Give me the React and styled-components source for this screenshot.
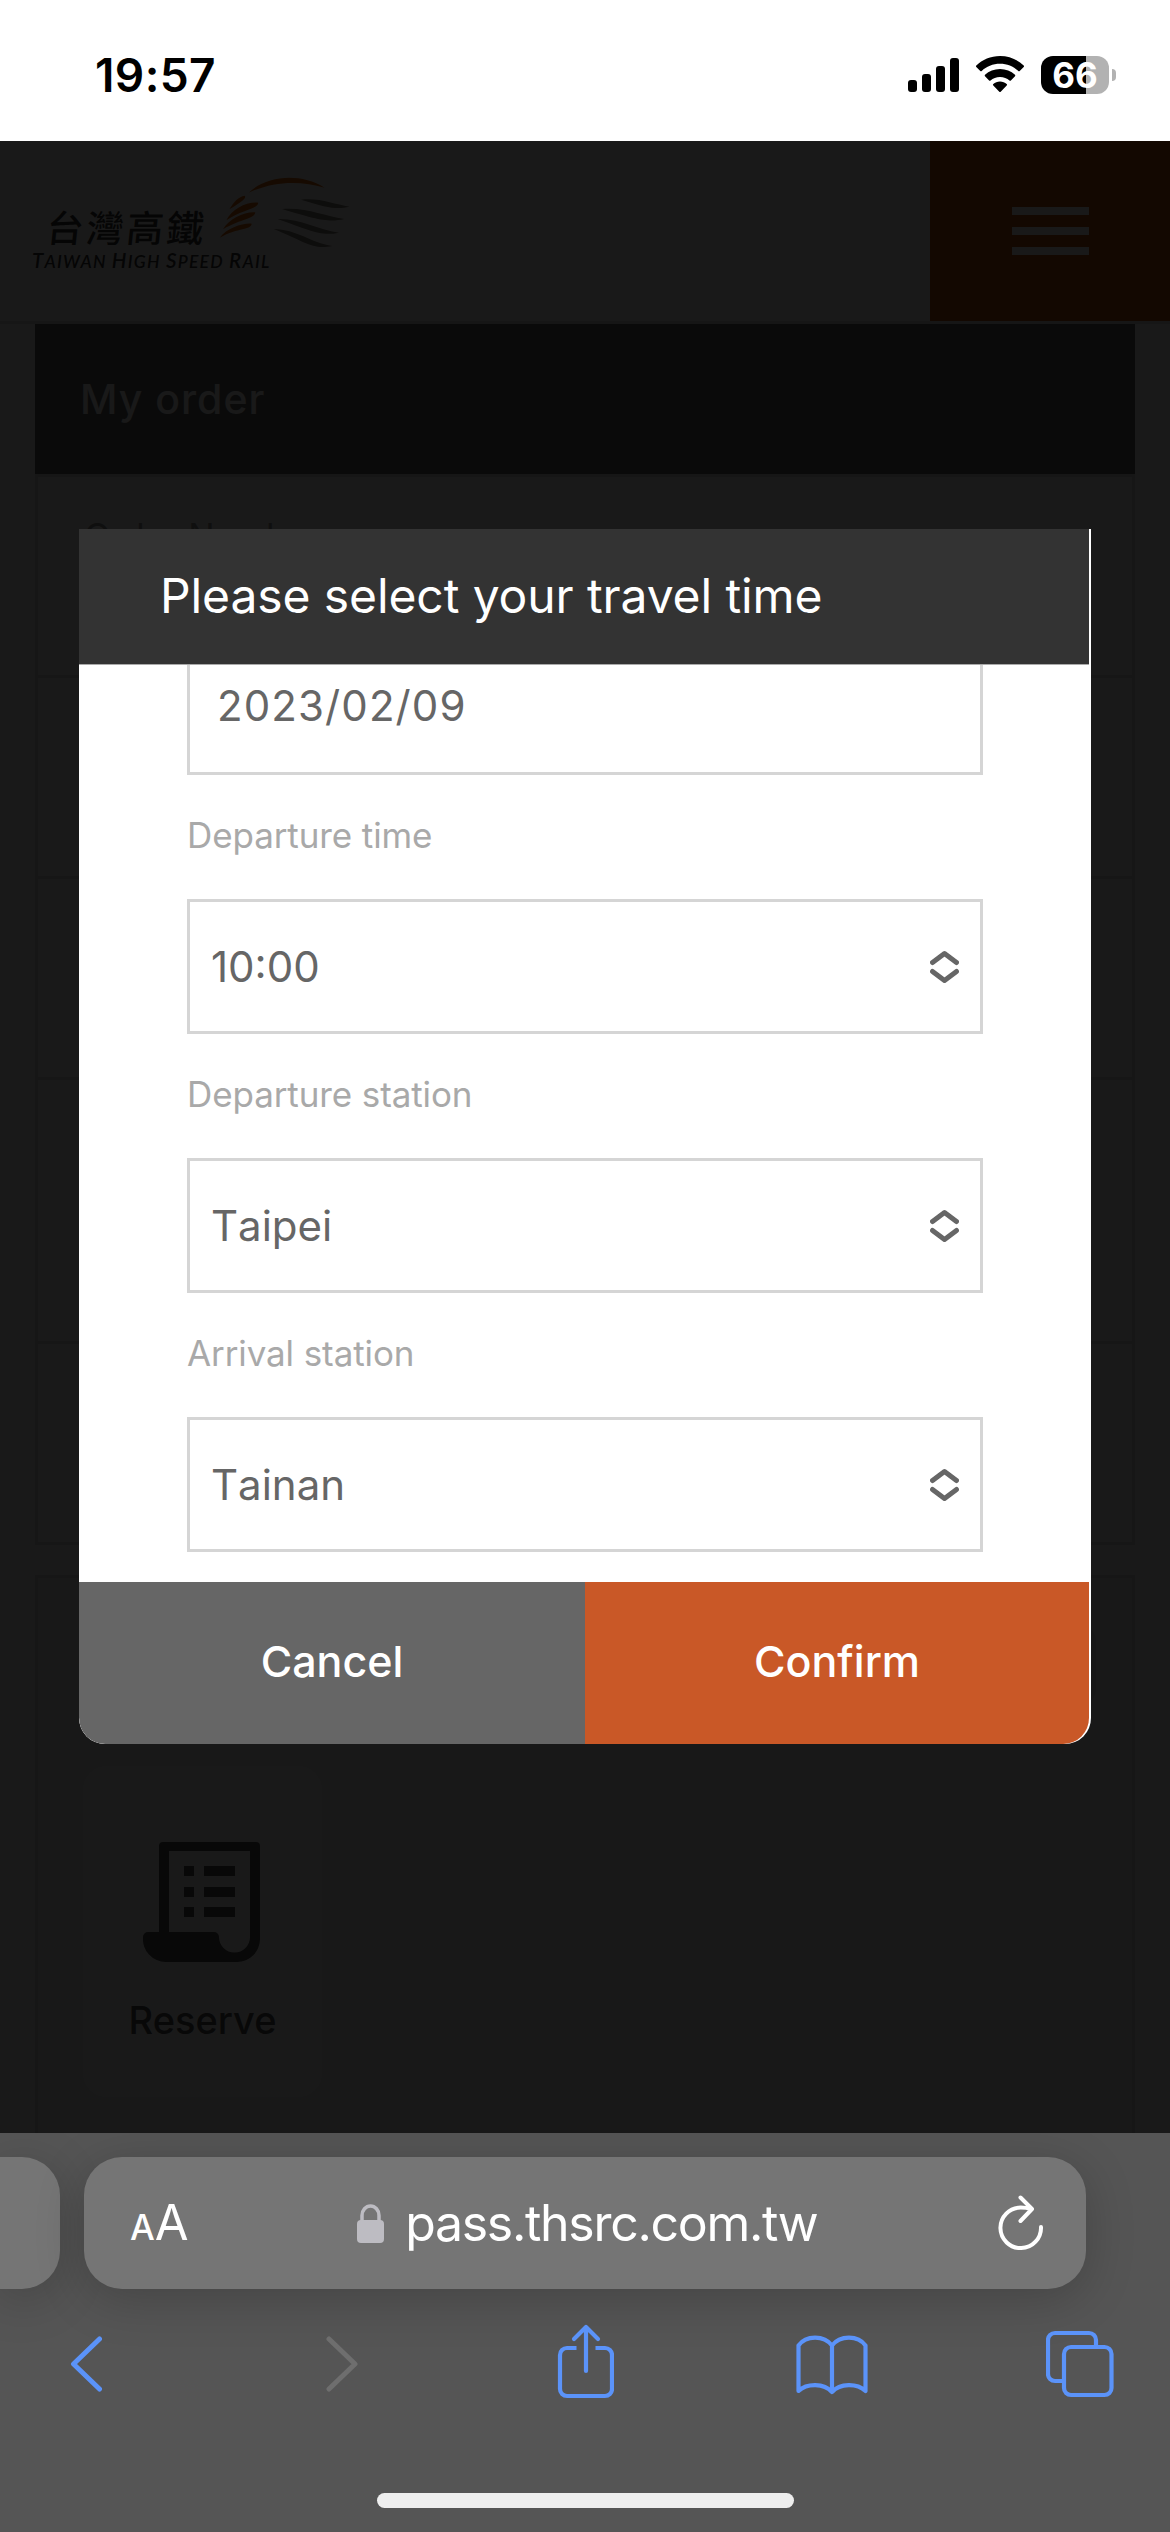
import React from "react";
import styled, { createGlobalStyle } from "styled-components";

const GlobalStyle = createGlobalStyle`
    * {
        box-sizing: border-box;
    }

    body {
        margin: 0;
        background: #fff;
        font-family: Inter, "Liberation Sans", "Noto Sans CJK TC", sans-serif;
    }
`;

const Phone = styled.div`
    width: 1170px;
    height: 2532px;
    display: flex;
    flex-direction: column;
    overflow: hidden;
`;

/* status bar */
const StatusBar = styled.div`
    height: 141px;
    padding: 8px 54px 0 95px;
    display: flex;
    align-items: center;
    justify-content: space-between;
    background: #fff;
`;
const Clock = styled.div`
    font-size: 46px;
    font-weight: 600;
    letter-spacing: 0.4px;
`;
const StatusIcons = styled.div`
    display: flex;
    align-items: center;
    gap: 17px;
`;
const Battery = styled.div`
    display: flex;
    align-items: center;
    gap: 3px;
`;
const BatteryBody = styled.div`
    width: 68px;
    height: 38px;
    border-radius: 12px;
    display: flex;
    align-items: center;
    justify-content: center;
    background: linear-gradient(to right, #000 66%, #b2b2b2 66%);
    color: #fff;
    font-size: 35px;
    font-weight: 700;
    line-height: 38px;
`;
const BatteryTip = styled.div`
    width: 4px;
    height: 12px;
    border-radius: 0 4px 4px 0;
    background: #b2b2b2;
`;

/* site behind the dialog */
const Site = styled.div`
    position: relative;
    height: 1992px;
    overflow: hidden;
    background: #fff;
`;
const SiteHeader = styled.div`
    height: 183px;
    display: flex;
    justify-content: space-between;
    border-bottom: 3px solid #ddd;
`;
const Logo = styled.div`
    padding: 36px 0 0 32px;
    display: flex;
    align-items: flex-start;
`;
const LogoText = styled.div`
    width: 185px;
    padding-top: 28px;
    white-space: nowrap;
    color: #3a3a3a;
`;
const LogoName = styled.div`
    padding-left: 15px;
    font: 500 37px/42px "Noto Sans CJK TC", sans-serif;
    letter-spacing: 3px;
    transform: skewX(-6deg);
`;
const LogoSub = styled.div`
    font: italic 600 17.5px/26px Lato, sans-serif;
    letter-spacing: 1.25px;

    &::first-letter, b {
        font-size: 20.5px;
        font-weight: 600;
    }
`;
const MenuButton = styled.div`
    width: 240px;
    padding-top: 66px;
    display: flex;
    flex-direction: column;
    align-items: center;
    gap: 12px;
    background: #be5010;
`;
const MenuLine = styled.div`
    width: 77px;
    height: 8px;
    background: #fff;
`;
const Card = styled.div`
    margin: 0 35px ${props => props.$gap || "0"};
    border: 3px solid #ddd;
    border-top-width: ${props => props.$titled ? "0" : "3px"};
    background: ${props => props.$bg || "#fff"};
`;
const CardTitle = styled.div`
    margin: 0 -3px;
    height: 150px;
    padding: 0 45px;
    background: #666;
    color: #fff;
    font-size: 41px;
    font-weight: 500;
    line-height: 150px;
    letter-spacing: 1px;
`;
const CardRow = styled.div`
    height: ${props => props.$height}px;
    padding: 36px 46px;
    border-top: 3px solid #ddd;
    color: #999;
    font-size: 35px;
    line-height: 46px;
`;
const Actions = styled.div`
    height: 700px;
    padding: 47px 36px 0 45px;
    display: flex;
    flex-direction: column;
    gap: 61px;
`;
const WideButton = styled.div`
    height: 80px;
    border-radius: 16px;
    background: #ddd;
`;
const Tile = styled.div`
    width: 239px;
    height: 331px;
    padding: 76px 0 0;
    border-radius: 24px;
    display: flex;
    flex-direction: column;
    align-items: center;
    gap: 35px;
    background: #fff;
    color: #555;
    font-size: 38px;
    font-weight: 500;
    line-height: 46px;

    svg {
        margin-right: 3px;
    }
`;

/* dialog */
const Overlay = styled.div`
    position: absolute;
    inset: 0;
    padding: 388px 79px 0;
    background: rgba(0, 0, 0, 0.9);
`;
const Dialog = styled.div`
    width: 1012px;
    height: 1215px;
    padding-right: 2px;
    display: flex;
    flex-direction: column;
    border-radius: 0 0 26px 26px;
    overflow: hidden;
    background: #fff;
`;
const DialogTitle = styled.div`
    flex: none;
    height: 135px;
    padding-left: 81px;
    background: #333;
    color: #fff;
    font-size: 48px;
    line-height: 133px;
    letter-spacing: -0.1px;
`;
const DialogBody = styled.div`
    height: 918px;
    padding: 0 106px 30px 108px;
    display: flex;
    flex-direction: column;
    justify-content: flex-end;
    border-top: 1px solid #aaa;
    overflow: hidden;
`;
const Label = styled.div`
    flex: none;
    height: 124px;
    color: #a9a9a9;
    font-size: 35px;
    line-height: 121px;
    letter-spacing: -0.1px;
`;
const Field = styled.div`
    flex: none;
    height: 135px;
    padding: 0 21px;
    display: flex;
    align-items: center;
    justify-content: space-between;
    border: 3px solid #d5d5d5;
    background: #fff;
    color: #666;
    font-size: 42px;
    font-kerning: none;
`;
const DateField = styled(Field)`
    padding: 0 27px 5px;
    letter-spacing: 1.1px;
`;
const DialogFooter = styled.div`
    flex: none;
    height: 162px;
    display: flex;
    border-radius: 0 0 26px 26px;
    overflow: hidden;
`;
const DialogButton = styled.div`
    flex: ${props => props.$grow};
    background: ${props => props.$bg};
    color: #fff;
    font-size: 43px;
    font-weight: 500;
    line-height: 159px;
    text-align: center;
`;

/* browser toolbar */
const Toolbar = styled.div`
    height: 399px;
    padding-top: 24px;
    display: flex;
    flex-direction: column;
    background: #555;
`;
const TabStrip = styled.div`
    display: flex;
    gap: 24px;
`;
const PrevTab = styled.div`
    width: 60px;
    height: 132px;
    border-radius: 0 38px 38px 0;
    background: #757575;
    box-shadow: 0 10px 50px rgba(0, 0, 0, 0.2);
`;
const AddressBar = styled.div`
    width: 1002px;
    height: 132px;
    padding: 0 42px 0 46px;
    border-radius: 38px;
    display: flex;
    align-items: center;
    justify-content: space-between;
    background: #757575;
    box-shadow: 0 10px 50px rgba(0, 0, 0, 0.2);
    color: #fff;
    line-height: 60px;
`;
const TextSize = styled.div`
    padding-top: 4px;
    display: flex;
    align-items: baseline;
    font-size: 49px;

    small {
        font-size: 35px;
        font-weight: 500;
    }
`;
const Address = styled.div`
    margin-right: 12px;
    display: flex;
    align-items: center;
    gap: 21px;
    font-size: 50px;
    letter-spacing: -1.3px;
`;
const NavRow = styled.div`
    height: 84px;
    margin-top: 33px;
    padding: 0 54px 0 49px;
    display: flex;
    align-items: center;
    justify-content: space-between;
`;
const NavItem = styled.div`
    width: 72px;
    display: flex;
    justify-content: center;

    svg {
        flex: none;
    }
`;
const HomeIndicator = styled.div`
    width: 417px;
    height: 15px;
    margin: 87px auto 0;
    border-radius: 8px;
    background: #eee;
`;

const BLUE = "#5b93f9";

const CARD_ROWS = [201, 201, 201, 264, 201];

const FIELDS = [
    { label: "Departure time", value: "10:00" },
    { label: "Departure station", value: "Taipei" },
    { label: "Arrival station", value: "Tainan" }
];

function SignalIcon() {
    return (
        <svg width="51" height="38" viewBox="0 0 51 38">
            <rect x="0" y="24" width="9" height="12" rx="3" />
            <rect x="14" y="18" width="9" height="18" rx="3" />
            <rect x="28" y="10" width="9" height="26" rx="3" />
            <rect x="42" y="2" width="9" height="34" rx="3" />
        </svg>
    );
}

function WifiIcon() {
    return (
        <svg width="48" height="38" viewBox="0 0 48 38">
            <path d="M24 0C14.700 0 6.300 3.600 0.300 9.500a1 1 0 0 0 0 1.400l4 4.100a1 1 0 0 0 1.400 0C10.400 10.500 16.900 7.800 24 7.800s13.600 2.700 18.300 7.200a1 1 0 0 0 1.400 0l4-4.100a1 1 0 0 0 0-1.400C41.700 3.600 33.300 0 24 0z" />
            <path d="M24 13c-5.800 0-11 2.200-15 5.800a1 1 0 0 0 0 1.400l4.100 4.200a1 1 0 0 0 1.400 0c2.500-2.200 5.800-3.500 9.500-3.500s7 1.300 9.500 3.500a1 1 0 0 0 1.400 0l4.100-4.200a1 1 0 0 0 0-1.400C35 15.200 29.800 13 24 13z" />
            <path d="M24 25.600c-2.600 0-4.900.9-6.700 2.400a1 1 0 0 0 0 1.500l6 6.200a1 1 0 0 0 1.400 0l6-6.200a1 1 0 0 0 0-1.500c-1.800-1.500-4.100-2.400-6.700-2.400z" />
        </svg>
    );
}

function LogoMark() {
    return (
        <svg width="134" height="72" viewBox="650 110 402 216">
            <g fill="#e06a10">
                <path d="M745 157C800 105 900 97 973 142C900 120 820 122 745 157z" />
                <path d="M687 207C700 185 715 168 733 166C740 172 725 184 687 207z" />
                <path d="M678 240C695 205 740 183 774 187C770 208 725 207 678 240z" />
                <path d="M668 267C685 235 735 213 765 216C762 237 725 234 668 267z" />
                <path d="M658 292C680 262 730 247 754 250C752 270 715 260 658 292z" />
            </g>
            <g fill="#888078">
                <path d="M902 178C960 172 1000 192 1048 199C1010 208 985 204 902 178z" />
                <path d="M845 206C920 200 970 227 1032 236C985 247 950 238 845 206z" />
                <path d="M832 236C900 234 950 267 1016 277C960 289 930 270 832 236z" />
                <path d="M820 266C890 267 930 307 996 317C935 329 920 306 820 266z" />
            </g>
        </svg>
    );
}

function ReserveIcon() {
    return (
        <svg width="117" height="120" viewBox="0 0 117 120" fill="#505050">
            <path fillRule="evenodd" d="M20 0H113a4 4 0 0 1 4 4V97a23 23 0 0 1-23 23H23A23 23 0 0 1 0 95a5 5 0 0 1 5-5H16V4a4 4 0 0 1 4-4zM26 9V90H71a5 5 0 0 1 5 5a15 15 0 0 0 31 0V9z" />
            <path d="M41 24h10v10H41zM41 45h10v10H41zM41 65h10v10H41zM61 24h31v10H61zM61 45h31v10H61zM61 65h31v10H61z" />
        </svg>
    );
}

function SelectArrows() {
    return (
        <svg width="29" height="34" viewBox="0 0 29 34" fill="none" stroke="#666" strokeWidth="5" strokeLinecap="round" strokeLinejoin="round">
            <path d="M2.500 12.500L14.500 3.500L26.500 12.500M2.500 21.500L14.500 30.500L26.500 21.500" />
        </svg>
    );
}

function LockIcon() {
    return (
        <svg width="27" height="39" viewBox="0 0 27 39">
            <rect y="16" width="27" height="23" rx="4" fill="#bdbcc2" />
            <path d="M5 18V11.500a8.500 9.500 0 0 1 17 0V18" fill="none" stroke="#bdbcc2" strokeWidth="3.500" />
        </svg>
    );
}

function ReloadIcon() {
    return (
        <svg width="46" height="60" viewBox="0 0 46 60" fill="none" stroke="#fff" strokeWidth="4" strokeLinecap="round" strokeLinejoin="round">
            <path d="M43 34A20.300 20.300 0 1 1 22.700 14.500Q28 14.500 33.500 16M22.500 4.500L34 16L22.500 28" />
        </svg>
    );
}

function BackIcon() {
    return (
        <svg width="34" height="84" viewBox="0 0 34 84" fill="none" stroke={BLUE} strokeWidth="5" strokeLinecap="round" strokeLinejoin="round">
            <path d="M31.500 17L5.500 42L31.500 67" />
        </svg>
    );
}

function ForwardIcon() {
    return (
        <svg width="48" height="84" viewBox="0 0 48 84" fill="none" stroke="#6e6e6e" strokeWidth="5" strokeLinecap="round" strokeLinejoin="round">
            <path d="M19 17L45 42L19 67" />
        </svg>
    );
}

function ShareIcon() {
    return (
        <svg width="62" height="84" viewBox="-6 0 62 84" fill="none" stroke={BLUE} strokeWidth="4.200">
            <path d="M18.500 26H9a7 7 0 0 0-7 7V67a7 7 0 0 0 7 7H47a7 7 0 0 0 7-7V33a7 7 0 0 0-7-7H37.500" />
            <path d="M28 49V6M16 17L28 5L40 17" strokeLinecap="round" strokeLinejoin="round" />
        </svg>
    );
}

function BookIcon() {
    return (
        <svg width="74" height="84" viewBox="-2 0 74 84" fill="none" stroke={BLUE} strokeWidth="4.200" strokeLinecap="round" strokeLinejoin="round">
            <path d="M36 23.500C28 13 10 13 2.500 23.500V69C11 61 28 61 36 70C44 61 61 61 69.500 69V23.500C62 13 44 13 36 23.500V70" />
        </svg>
    );
}

function TabsIcon() {
    return (
        <svg width="68" height="84" viewBox="0 0 68 84" fill="none" stroke={BLUE} strokeWidth="4.200">
            <rect x="18" y="25" width="47.500" height="48" rx="7" />
            <path d="M18 59H9a7 7 0 0 1-7-7V18a7 7 0 0 1 7-7H43a7 7 0 0 1 7 7V25" />
        </svg>
    );
}

const NAV_ICONS = [BackIcon, ForwardIcon, ShareIcon, BookIcon, TabsIcon];

function App() {
    return (
        <Phone>
            <GlobalStyle />
            <StatusBar>
                <Clock>19:57</Clock>
                <StatusIcons>
                    <SignalIcon />
                    <WifiIcon />
                    <Battery>
                        <BatteryBody>66</BatteryBody>
                        <BatteryTip />
                    </Battery>
                </StatusIcons>
            </StatusBar>

            <Site>
                <SiteHeader>
                    <Logo>
                        <LogoText>
                            <LogoName>台灣高鐵</LogoName>
                            <LogoSub>TAIWAN <b>H</b>IGH <b>S</b>PEED <b>R</b>AIL</LogoSub>
                        </LogoText>
                        <LogoMark />
                    </Logo>
                    <MenuButton>
                        <MenuLine />
                        <MenuLine />
                        <MenuLine />
                    </MenuButton>
                </SiteHeader>

                <Card $titled $gap="30px">
                    <CardTitle>My order</CardTitle>
                    {CARD_ROWS.map((height, index) => (
                        <CardRow key={index} $height={height}>{index === 0 ? "Order Number" : ""}</CardRow>
                    ))}
                </Card>

                <Card $bg="#f2f2f2">
                    <Actions>
                        <WideButton />
                        <Tile>
                            <ReserveIcon />
                            Reserve
                        </Tile>
                    </Actions>
                </Card>

                <Overlay>
                    <Dialog>
                        <DialogTitle>Please select your travel time</DialogTitle>
                        <DialogBody>
                            <DateField>2023/02/09</DateField>
                            {FIELDS.map(item => (
                                <React.Fragment key={item.label}>
                                    <Label>{item.label}</Label>
                                    <Field>
                                        {item.value}
                                        <SelectArrows />
                                    </Field>
                                </React.Fragment>
                            ))}
                        </DialogBody>
                        <DialogFooter>
                            <DialogButton $grow={506} $bg="#666">Cancel</DialogButton>
                            <DialogButton $grow={504} $bg="#c95827">Confirm</DialogButton>
                        </DialogFooter>
                    </Dialog>
                </Overlay>
            </Site>

            <Toolbar>
                <TabStrip>
                    <PrevTab />
                    <AddressBar>
                        <TextSize><small>A</small>A</TextSize>
                        <Address>
                            <LockIcon />
                            pass.thsrc.com.tw
                        </Address>
                        <ReloadIcon />
                    </AddressBar>
                </TabStrip>
                <NavRow>
                    {NAV_ICONS.map((Icon, index) => (
                        <NavItem key={index}>
                            <Icon />
                        </NavItem>
                    ))}
                </NavRow>
                <HomeIndicator />
            </Toolbar>
        </Phone>
    );
}

export default App;
